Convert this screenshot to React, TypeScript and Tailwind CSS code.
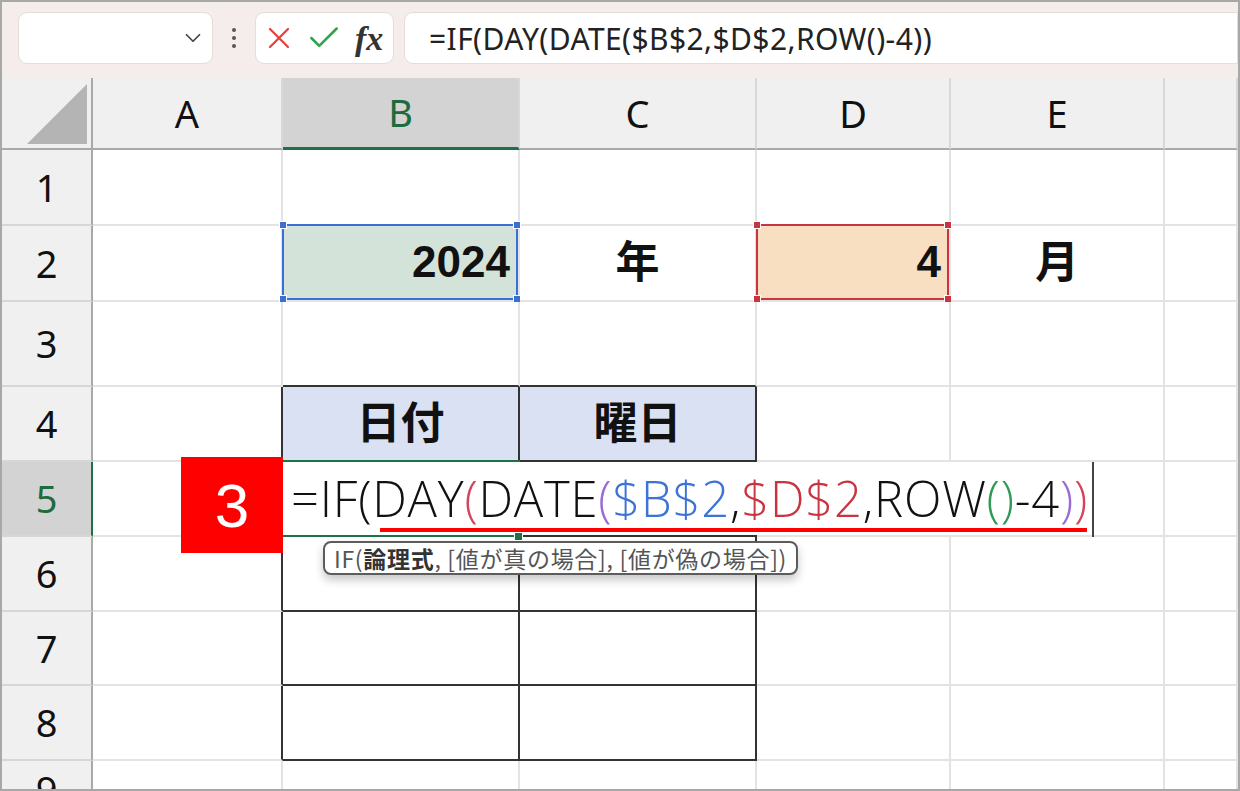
import { Check, ChevronDown, X } from "lucide-react";

const gR = "border-r-2 border-r-[#e3e3e3]";
const kR = "border-r-2 border-r-[#333333]";
const gB = "border-b-2 border-b-[#e3e3e3]";
const kB = "border-b-2 border-b-[#333333]";

const font = { fontFamily: '"Noto Sans", "Noto Sans CJK JP", sans-serif' };

function Handles({ color }: { color: string }) {
  const h = "absolute w-[8px] h-[8px] border border-white " + color;
  return (
    <>
      <div className={h + " -left-[5px] -top-[5px]"} />
      <div className={h + " -right-[5px] -top-[5px]"} />
      <div className={h + " -left-[5px] -bottom-[5px]"} />
      <div className={h + " -right-[5px] -bottom-[5px]"} />
    </>
  );
}

function Editor() {
  return (
    <>
      <div className="absolute right-full -top-[5px] w-[102px] h-[96px] bg-[#ff0000] z-20 flex items-center justify-center text-white text-[62px] font-['Liberation_Sans',sans-serif]">
        3
      </div>
      <div className="absolute left-0 top-0 w-[809px] h-[73px] bg-white z-10 flex items-center pl-[8px] text-[49px] font-light tracking-[0.75px] text-[#111] leading-none font-['Open_Sans','Noto_Sans',sans-serif]">
        <span>=IF(DAY</span>
        <span className="text-[#d2455c]">(</span>
        <span>DATE</span>
        <span className="text-[#9a6bd4]">(</span>
        <span className="text-[#3b73d8]">$B$2</span>
        <span>,</span>
        <span className="text-[#c9343f]">$D$2</span>
        <span>,ROW</span>
        <span className="text-[#2e9a55]">()</span>
        <span>-4</span>
        <span className="text-[#9a6bd4]">)</span>
        <span className="text-[#d2455c]">)</span>
        <div className="absolute left-[97px] top-[66px] w-[707px] h-[4px] bg-[#ff0000]" />
        <div className="absolute left-[809px] top-0 w-[2px] h-[75px] bg-[#444]" />
      </div>
      <div className="absolute left-0 -top-[2px] w-[237px] h-[2px] bg-[#1e7145] z-10" />
      <div className="absolute left-0 top-[73px] w-[235px] h-[2px] bg-[#1e7145] z-10" />
      <div className="absolute left-[231px] top-[70px] w-[9px] h-[9px] bg-[#1e7145] border border-white z-10" />
      <div className="absolute left-[40px] top-[79px] h-[34px] px-[9px] z-20 bg-white border-2 border-[#5c5c5c] rounded-[8px] shadow-[0_5px_10px_rgba(0,0,0,0.22)] flex items-center text-[23px] tracking-[0.7px] text-[#555] whitespace-nowrap font-['Noto_Sans_CJK_JP',sans-serif]">
        IF(<b className="text-[#333]">論理式</b>, [値が真の場合], [値が偽の場合])
      </div>
    </>
  );
}

function cellContent(row: number, col: number) {
  const big = "text-[44px] font-bold text-[#111] font-['Liberation_Sans','Noto_Sans_CJK_JP',sans-serif]";
  if (row === 2 && col === 1)
    return (
      <div className={"absolute -left-[1px] -top-[2px] right-0 -bottom-[0px] bg-[#d3e3d9] border-2 border-[#3a6fd3] flex items-center justify-end pr-[6px] " + big}>
        2024
        <Handles color="bg-[#3a6fd3]" />
      </div>
    );
  if (row === 2 && col === 3)
    return (
      <div className={"absolute -left-[1px] -top-[2px] right-0 -bottom-[0px] bg-[#f9dfc1] border-2 border-[#c8343f] flex items-center justify-end pr-[6px] " + big}>
        4
        <Handles color="bg-[#c8343f]" />
      </div>
    );
  if (row === 2 && col === 2) return <div className={"h-full flex items-center justify-center " + big}>年</div>;
  if (row === 2 && col === 4) return <div className={"h-full flex items-center justify-center " + big}>月</div>;
  if (row === 4 && (col === 1 || col === 2))
    return (
      <div className={"h-full bg-[#dae1f2] flex items-center justify-center " + big}>
        {col === 1 ? "日付" : "曜日"}
      </div>
    );
  if (row === 5 && col === 1) return <Editor />;
  return null;
}

function Row({ n }: { n: number }) {
  const cols = [0, 1, 2, 3, 4, 5];
  const sel = n === 5;
  return (
    <>
      <div
        className={
          "flex items-center justify-center text-[38px] border-b-2 border-b-[#d6d6d6] border-r-2 " +
          (sel ? "bg-[#d3d3d3] text-[#1e6b3e] border-r-[#1e7145]" : "bg-[#f0f0f0] text-[#111] border-r-[#a9a9a9]")
        }
        style={font}
      >
        {n}
      </div>
      {cols.map((c) => {
        const inTable = n >= 4 && n <= 8;
        const right = (c === 0 || c === 1 || c === 2) && inTable ? kR : gR;
        const bottom = (c === 1 || c === 2) && n >= 3 && n <= 8 ? kB : gB;
        return (
          <div key={c} className={"relative bg-white " + right + " " + bottom}>
            {cellContent(n, c)}
          </div>
        );
      })}
    </>
  );
}

export default function App() {
  const headers = ["A", "B", "C", "D", "E", ""];
  return (
    <div className="w-[1240px] h-[791px] border-2 border-[#a8a8a8] overflow-hidden flex flex-col bg-white" style={font}>
      <div className="h-[76px] shrink-0 bg-[#f4edeb] flex items-start pt-[10px] pl-[16px]">
        <div className="w-[195px] h-[52px] bg-white border border-[#e6dcda] rounded-[9px] flex items-center justify-end pr-[6px]">
          <ChevronDown size={26} strokeWidth={1.6} className="text-[#444]" />
        </div>
        <div className="w-[42px] h-[52px] flex flex-col items-center justify-center gap-[4px]">
          <div className="w-[4px] h-[4px] rounded-full bg-[#555]" />
          <div className="w-[4px] h-[4px] rounded-full bg-[#555]" />
          <div className="w-[4px] h-[4px] rounded-full bg-[#555]" />
        </div>
        <div className="w-[139px] h-[52px] bg-white border border-[#e6dcda] rounded-[9px] flex items-center pl-[5px]">
          <X size={36} strokeWidth={1.5} className="text-[#e8403f]" />
          <Check size={38} strokeWidth={1.6} className="text-[#2fa34a] ml-[8px]" />
          <span className="ml-[12px] text-[34px] italic font-bold text-[#333] font-['Liberation_Serif',serif]">fx</span>
        </div>
        <div className="flex-1 ml-[10px] h-[52px] bg-white border border-[#e6dcda] rounded-l-[9px] flex items-center pl-[24px] text-[30px] tracking-[0.4px] text-[#222] whitespace-nowrap">
          =IF(DAY(DATE($B$2,$D$2,ROW()-4))
        </div>
      </div>
      <div className="flex-1 grid grid-cols-[91px_190px_237px_237px_194px_214px_1fr] grid-rows-[72px_76px_76px_85px_75px_75px_75px_74px_75px_1fr]">
        <div className="relative bg-[#f0f0f0] border-r-2 border-r-[#a9a9a9] border-b-2 border-b-[#a9a9a9]">
          <svg className="absolute left-[24px] top-[5px]" width="62" height="62" viewBox="0 0 62 62">
            <polygon points="61,1 61,61 1,61" fill="#b4b4b4" />
          </svg>
        </div>
        {headers.map((h, i) => (
          <div
            key={i}
            className={
              "flex items-center justify-center text-[38px] border-r-2 border-r-[#d8d8d8] " +
              (i === 1
                ? "bg-[#d3d3d3] text-[#1e6b3e] border-b-[3px] border-b-[#1e7145]"
                : "bg-[#f0f0f0] text-[#111] border-b-2 border-b-[#a9a9a9]")
            }
          >
            {h}
          </div>
        ))}
        {[1, 2, 3, 4, 5, 6, 7, 8, 9].map((n) => (
          <Row key={n} n={n} />
        ))}
      </div>
    </div>
  );
}
